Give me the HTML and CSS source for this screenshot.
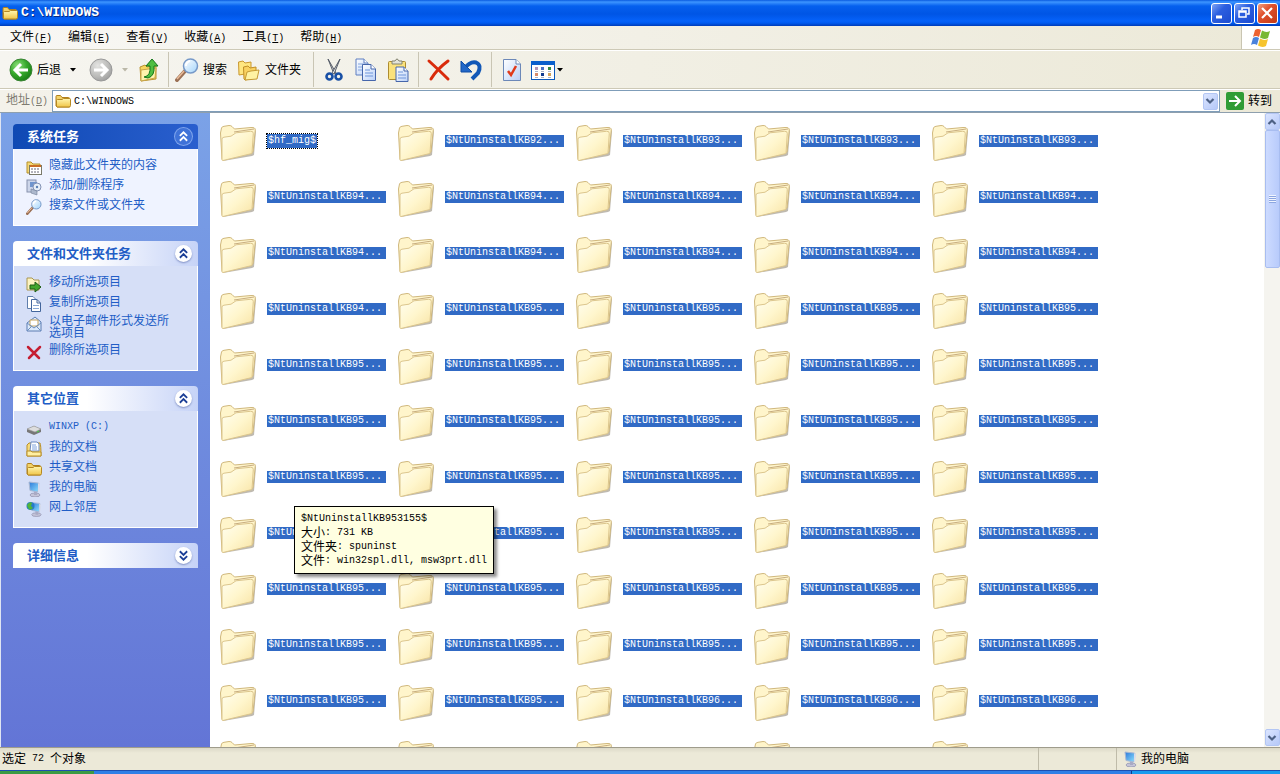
FILE: index.html
```html
<!DOCTYPE html>
<html lang="zh-CN">
<head>
<meta charset="utf-8">
<title>C:\WINDOWS</title>
<link rel="stylesheet" href="styles.css">
</head>
<body>
<svg class="defs" aria-hidden="true">
  <defs>
    <linearGradient id="gPaper" x1="0" y1="0" x2="1" y2="1"><stop offset="0" stop-color="#fffef0"/><stop offset=".5" stop-color="#fff6cd"/><stop offset="1" stop-color="#f8e3a4"/></linearGradient>
    <linearGradient id="gFolder" x1="0" y1="0" x2="0" y2="1"><stop offset="0" stop-color="#fff6b0"/><stop offset="1" stop-color="#f0c548"/></linearGradient>
    <radialGradient id="gGreen" cx=".35" cy=".3" r=".8"><stop offset="0" stop-color="#8ee07c"/><stop offset=".5" stop-color="#37a92c"/><stop offset="1" stop-color="#137712"/></radialGradient>
    <radialGradient id="gGray" cx=".35" cy=".3" r=".8"><stop offset="0" stop-color="#e4e4e2"/><stop offset=".6" stop-color="#bcbcba"/><stop offset="1" stop-color="#999"/></radialGradient>
    <linearGradient id="gLens" x1="0" y1="0" x2="1" y2="1"><stop offset="0" stop-color="#fff"/><stop offset="1" stop-color="#a4d5fb"/></linearGradient>
    <linearGradient id="gDoc" x1="0" y1="0" x2="1" y2="1"><stop offset="0" stop-color="#fff"/><stop offset="1" stop-color="#b9d0f8"/></linearGradient>
    <linearGradient id="gScreen" x1="0" y1="0" x2="1" y2="1"><stop offset="0" stop-color="#2c78d8"/><stop offset="1" stop-color="#8fe2ff"/></linearGradient>
  </defs>
  <symbol id="bigfolder" viewBox="0 0 38 38">
    <path d="M4 37L4 33L33 29L36 6L37 7L35 31L33 32Z" fill="#8b8270" opacity=".55"/>
    <path d="M1.500 9L2.500 4Q3 2.500 5 2.300L10 1.500Q12 1.400 13 2.500L15.500 5L32 3.500Q36.500 3.200 36.300 6L34 28L3 35.500Z" fill="#fff5cb" stroke="#d0b87d"/>
    <path d="M15 8L35 5" stroke="#c8ad80" fill="none"/>
    <path d="M3 15Q3 13.500 5 13.200L12 12.200L17 8.800L31.500 7.300Q34.500 7 34.300 9.500L33 29.500L4 36.500Q3 36.600 3 35.500Z" fill="url(#gPaper)" stroke="#dcc68d"/>
  </symbol>
  <symbol id="folder" viewBox="0 0 16 16">
    <path d="M1 13V3.500Q1 2.500 2 2.500H5.500L7 4.500H13.500Q14.500 4.500 14.500 5.500V14H2Z" fill="#f3d36a" stroke="#b07f1c"/>
    <path d="M1.500 13.500V7.500Q1.500 6.500 2.500 6.500H7L8.500 5.500H14.500Q15.500 5.500 15.500 6.500V12.500Q15.500 14 14 14H2Z" fill="url(#gFolder)" stroke="#b58822"/>
  </symbol>
  <symbol id="lens" viewBox="0 0 24 24">
    <path d="M2 22L10 13" stroke="#9b7055" stroke-width="4" stroke-linecap="round"/><path d="M2 21L9 13" stroke="#eabb98" stroke-width="1.500"/>
    <circle cx="15.500" cy="8" r="7" fill="url(#gLens)" stroke="#7799c8" stroke-width="1.500"/><path d="M11 8Q11 4 15 3" stroke="#fff" stroke-width="2" fill="none"/>
  </symbol>
  <symbol id="docs" viewBox="0 0 22 24">
    <path d="M1 1H9L13 5V17H1Z" fill="url(#gDoc)" stroke="#5f7fc0"/><path d="M9 1V5H13" fill="#fff" stroke="#5f7fc0"/><path d="M3 6H9M3 9H10M3 12H7" stroke="#83a5df"/>
    <path d="M7.500 6.500H16L20.500 11V22.500H7.500Z" fill="url(#gDoc)" stroke="#4666ab"/><path d="M16 6.500V11H20.500" fill="#fff" stroke="#4666ab"/><path d="M10 12H15M10 15H18M10 18H18" stroke="#6f96db"/>
  </symbol>
  <symbol id="computer" viewBox="0 0 16 16">
    <ellipse cx="9" cy="14" rx="5" ry="2" fill="#c4c4d8" stroke="#8486a4" stroke-width=".6"/><path d="M8 10L11 9V14H8Z" fill="#aaaac4"/>
    <path d="M3 1L12 2Q13 2 13 3L12 11L4 9.500Z" fill="url(#gScreen)" stroke="#a9b8d4"/><path d="M12 2L14 3.500L13 11L12 11Z" fill="#d8dcec"/>
  </symbol>
  <symbol id="up" viewBox="0 0 14 14"><path d="M4 6.500L7 3.500L10 6.500M4 10.500L7 7.500L10 10.500" fill="none" stroke="currentColor" stroke-width="1.500"/></symbol>
  <symbol id="chev" viewBox="0 0 10 8"><path d="M1.500 2L5 5.500L8.500 2" fill="none" stroke="#4d6185" stroke-width="2.200"/></symbol>
</svg>

<div class="window">
  <header class="title">
    <svg class="i16"><use href="#folder"/></svg>
    <h1>C:\WINDOWS</h1>
    <button class="cap" aria-label="最小化"><svg viewBox="0 0 18 18"><path d="M4 13H10" stroke="#fff" stroke-width="3"/></svg></button>
    <button class="cap" aria-label="还原"><svg viewBox="0 0 18 18"><path d="M7 6V4H14V10H12" fill="none" stroke="#fff" stroke-width="1.500"/><path d="M4 7H11V13H4ZM4 8H11" fill="none" stroke="#fff" stroke-width="1.500"/></svg></button>
    <button class="cap close" aria-label="关闭"><svg viewBox="0 0 18 18"><path d="M4 4L14 14M14 4L4 14" stroke="#fff" stroke-width="2.200"/></svg></button>
  </header>

  <nav class="menu">
    <button>文件<span class="lat">(<u>F</u>)</span></button>
    <button>编辑<span class="lat">(<u>E</u>)</span></button>
    <button>查看<span class="lat">(<u>V</u>)</span></button>
    <button>收藏<span class="lat">(<u>A</u>)</span></button>
    <button>工具<span class="lat">(<u>T</u>)</span></button>
    <button>帮助<span class="lat">(<u>H</u>)</span></button>
    <div class="flag"><svg viewBox="0 0 22 20">
      <path d="M5 2Q8 0 11 2L9 9Q6 7 3 9Z" fill="#ed6231"/><path d="M12 2.500Q16 5 20 3L18 10Q14 12 10 9.500Z" fill="#79b833"/>
      <path d="M3 10Q6 8 9 10L7 17Q4 15 1 17Z" fill="#4a82dc"/><path d="M10 10.500Q14 13 18 11L16 18Q12 20 8 17.500Z" fill="#f6c42d"/></svg></div>
  </nav>

  <div class="toolbar">
    <button class="back"><svg class="i24" viewBox="0 0 24 24"><circle cx="12" cy="12" r="11" fill="url(#gGreen)" stroke="#3a8434"/><path d="M19 12H7M12 6L6 12L12 18" fill="none" stroke="#fff" stroke-width="3"/></svg>后退</button>
    <button class="drop" aria-label="后退列表"><svg viewBox="0 0 6 4"><path d="M0 0H6L3 3.500Z" fill="#000"/></svg></button>
    <button class="fwd" aria-label="前进"><svg class="i24" viewBox="0 0 24 24"><circle cx="12" cy="12" r="11" fill="url(#gGray)" stroke="#999"/><path d="M5 12H17M12 6L18 12L12 18" fill="none" stroke="#fff" stroke-width="3"/></svg></button>
    <button class="drop" aria-label="前进列表"><svg viewBox="0 0 6 4"><path d="M0 0H6L3 3.500Z" fill="#bbb8a8"/></svg></button>
    <button class="upbtn" aria-label="向上"><svg class="i24" viewBox="0 0 24 24"><path d="M3 9L8 7L10 9L19 7V21L4 23Z" fill="#f8d75f" stroke="#b99230"/><path d="M4 12L19 10L18 20L4 23Z" fill="#fff3ad" stroke="#c9a548"/><path d="M7 19Q14 18 13 8H9L15 1L21 8H17Q18 18 11 20Z" fill="#4fbe42" stroke="#15761a"/></svg></button>
    <i class="sep first"></i>
    <button class="search"><svg class="i24"><use href="#lens"/></svg>搜索</button>
    <button class="folders"><svg class="i24" viewBox="0 0 24 24"><path d="M2 17L1.500 4L6 3L8 5L14 4V15Z" fill="#ffe680" stroke="#c99830"/><path d="M7 21L6.500 9L11 8L13 10L19 9V20L8 22Z" fill="#f9d160" stroke="#c08e26"/><path d="M8 22L10 14L14 13L22 12L20 21Z" fill="#fff2a3" stroke="#c59a34"/></svg>文件夹</button>
    <i class="sep"></i>
    <button class="tool" aria-label="剪切"><svg class="i24" viewBox="0 0 24 24"><path d="M6 1L14 15L12 16Z" fill="#ddd" stroke="#555c68"/><path d="M18 1L10 15L12 16Z" fill="#eee" stroke="#555c68"/><circle cx="7.500" cy="18.500" r="3" fill="none" stroke="#1950a5" stroke-width="2.600"/><circle cx="16.500" cy="18.500" r="3" fill="none" stroke="#1950a5" stroke-width="2.600"/></svg></button>
    <button class="tool" aria-label="复制"><svg class="i24"><use href="#docs"/></svg></button>
    <button class="tool" aria-label="粘贴"><svg class="i24" viewBox="0 0 24 24"><rect x="2.500" y="3.500" width="17" height="18" rx="1" fill="#fbe27c" stroke="#ad8c30"/><path d="M6 6V3H9Q11 -1 13 3H16V6Z" fill="#e4e4da" stroke="#82826e"/><path d="M10 9H18L22 13V23.500H10Z" fill="url(#gDoc)" stroke="#4666ab"/><path d="M18 9V13H22" fill="#fff" stroke="#4666ab"/><path d="M12 14H17M12 17H20M12 20H20" stroke="#6f96db"/></svg></button>
    <i class="sep"></i>
    <button class="tool" aria-label="删除"><svg class="i24" viewBox="0 0 24 24"><path d="M2 3Q12 12 21 21M21 3Q10 11 4 21" fill="none" stroke="#d92b0b" stroke-width="3" stroke-linecap="round"/></svg></button>
    <button class="tool" aria-label="撤消"><svg class="i24" viewBox="0 0 24 24"><path d="M5 11Q11 3 17 4.500Q23 7 19 15L13 21" fill="none" stroke="#1258b7" stroke-width="4"/><path d="M2 3V14H13Z" fill="#2268c8" stroke="#0e4da5"/></svg></button>
    <i class="sep"></i>
    <button class="tool" aria-label="属性"><svg class="i24" viewBox="0 0 24 24"><path d="M3.500 1.500H16L20.500 6V22.500H3.500Z" fill="url(#gDoc)" stroke="#6c88b8"/><path d="M16 1.500V6H20.500" fill="#fff" stroke="#6c88b8"/><path d="M8 13L11 17L16 8" fill="none" stroke="#e03a1b" stroke-width="2.500"/></svg></button>
    <button class="tool views" aria-label="查看方式"><svg class="i24" viewBox="0 0 24 24"><rect x=".5" y="3.500" width="23" height="18" fill="#fff" stroke="#0b59bd"/><path d="M0 3H24V7H0Z" fill="#0b60cc"/><path d="M4 9H7V12H4Z" fill="#b196b8"/><path d="M10 9H13V12H10Z" fill="#4772c4"/><path d="M17 9H20V12H17Z" fill="#338a41"/><path d="M4 15H7V18H4Z" fill="#d58a69"/><path d="M10 15H13V18H10Z" fill="#103c90"/><path d="M17 15H20V18H17Z" fill="#d1a25c"/><path d="M4 13.500H7M10 13.500H13M17 13.500H20M4 19.500H7M10 19.500H13M17 19.500H20" stroke="#a9b4c8"/></svg><svg class="arrow" viewBox="0 0 6 4"><path d="M0 0H6L3 3.500Z"/></svg></button>
  </div>

  <form class="address">
    <label for="addr">地址<span class="lat">(<u>D</u>)</span></label>
    <div class="combo">
      <svg class="i16"><use href="#folder"/></svg>
      <input id="addr" type="text" value="C:\WINDOWS">
      <button type="button" class="sbtn" aria-label="展开"><svg viewBox="0 0 10 8"><use href="#chev"/></svg></button>
    </div>
    <button type="button" class="go"><svg viewBox="0 0 18 18"><rect width="18" height="18" rx="2" fill="#2f9c35"/><path d="M3 9H14M9 4L14 9L9 14" fill="none" stroke="#fff" stroke-width="2"/></svg>转到</button>
  </form>

  <div class="content">
    <aside class="side">
      <section class="panel primary">
        <h2>系统任务<button aria-label="折叠"><svg><use href="#up"/></svg></button></h2>
        <ul>
          <li><svg class="i16" viewBox="0 0 16 16"><path d="M1 14V3H5L7 5H14V14Z" fill="#f5d874" stroke="#b5902c"/><rect x="3.500" y="6.500" width="12" height="9" fill="#fff" stroke="#7a7a6a"/><path d="M4 7H15" stroke="#c96d26" stroke-width="2"/><path d="M6 9V15M9 9V15M12 9V15" stroke="#667" stroke-dasharray="2 1"/></svg><a href="#">隐藏此文件夹的内容</a></li>
          <li><svg class="i16" viewBox="0 0 16 16"><rect x="1" y="1" width="9" height="12" fill="#cdd6ea" stroke="#8792ad"/><path d="M4 3H11V8H4Z" fill="#6f95cd"/><circle cx="11" cy="8" r="4" fill="#e6eff8" stroke="#8392b4"/><circle cx="11" cy="8" r="1.200" fill="#5c80b4"/><path d="M5 10L11 12V16L5 14Z" fill="#acb8cd" stroke="#737f99" stroke-width=".6"/></svg><a href="#">添加/删除程序</a></li>
          <li><svg class="i16"><use href="#lens"/></svg><a href="#">搜索文件或文件夹</a></li>
        </ul>
      </section>
      <section class="panel">
        <h2>文件和文件夹任务<button aria-label="折叠"><svg><use href="#up"/></svg></button></h2>
        <ul>
          <li><svg class="i16" viewBox="0 0 16 16"><path d="M1 14V2H6L8 4H13V14Z" fill="#fdf3c0" stroke="#aa9650"/><path d="M4 13V9H9V6L15 11L9 16V13Z" fill="#42a52d" stroke="#1f5c14"/></svg><a href="#">移动所选项目</a></li>
          <li><svg class="i16" viewBox="0 0 16 16"><path d="M1.500 .5H7L10.500 4V12.500H1.500Z" fill="#fff" stroke="#5f7eac"/><path d="M5.500 3.500H11L14.500 7V15.500H5.500Z" fill="#fff" stroke="#44669c"/><path d="M11 3.500V7H14.500" fill="none" stroke="#44669c"/><path d="M7 9.500H13M7 12.500H13" stroke="#8aa8d4"/></svg><a href="#">复制所选项目</a></li>
          <li class="two"><svg class="i16" viewBox="0 0 16 16"><path d="M1 7L9 1L15 6V15H1Z" fill="#dbe9fc" stroke="#5c7db1"/><path d="M4 4H12V10H4Z" fill="#fff" stroke="#c6a35d"/><path d="M1 7L8 12L15 7M1 15L6 10M15 15L10 10" fill="none" stroke="#6c8fc1"/></svg><a href="#">以电子邮件形式发送所选项目</a></li>
          <li><svg class="i16" viewBox="0 0 16 16"><path d="M2 3L13 14M14 3L3 14" stroke="#c51e32" stroke-width="2.500" stroke-linecap="round"/></svg><a href="#">删除所选项目</a></li>
        </ul>
      </section>
      <section class="panel">
        <h2>其它位置<button aria-label="折叠"><svg><use href="#up"/></svg></button></h2>
        <ul>
          <li><svg class="i16" viewBox="0 0 16 16"><path d="M1 8L8 5L15 8V11L8 14L1 11Z" fill="#777"/><path d="M1 8L8 5L15 8L9 11Z" fill="#ddd" stroke="#999" stroke-width=".6"/><path d="M11 11L13 10" stroke="#4d4"/></svg><a href="#" class="lat">WINXP (C:)</a></li>
          <li><svg class="i16" viewBox="0 0 16 16"><path d="M1 15V4L3 2H14Q15 4 15 15Z" fill="#f7da78" stroke="#b98f2b"/><path d="M5 1H11L13 3V10H4Z" fill="#fff" stroke="#6a88c0"/><path d="M6 4H10M6 6H11M6 8H11" stroke="#7ea2dd"/><path d="M1 10H5L6 11H15V15H1Z" fill="#ffefa2" stroke="#b98f2b"/></svg><a href="#">我的文档</a></li>
          <li><svg class="i16"><use href="#folder"/></svg><a href="#">共享文档</a></li>
          <li><svg class="i16"><use href="#computer"/></svg><a href="#">我的电脑</a></li>
          <li><svg class="i16" viewBox="0 0 16 16"><g transform="translate(2)"><use href="#computer" width="15" height="16"/></g><circle cx="4.500" cy="5" r="4" fill="#277bc8"/><path d="M1 4Q4 0 6 2L5 5L7 7L4 9L2 7Z" fill="#4fb53a"/></svg><a href="#">网上邻居</a></li>
        </ul>
      </section>
      <section class="panel closed">
        <h2>详细信息<button aria-label="展开"><svg class="flip"><use href="#up"/></svg></button></h2>
      </section>
    </aside>
    <main class="files" id="files"></main>
    <div class="scroll" aria-hidden="true">
      <span class="sbtn"><svg class="flip" viewBox="0 0 10 8"><use href="#chev"/></svg></span>
      <div class="track"><div class="thumb"><i></i></div></div>
      <span class="sbtn"><svg viewBox="0 0 10 8"><use href="#chev"/></svg></span>
    </div>
    <div class="tip" role="tooltip">
      <div><span class="lat">$NtUninstallKB953155$</span></div>
      <div>大小<span class="lat">: 731 KB</span></div>
      <div>文件夹<span class="lat">: spuninst</span></div>
      <div>文件<span class="lat">: win32spl.dll, msw3prt.dll</span></div>
    </div>
  </div>

  <footer class="status">
    <div class="count">选定<span class="lat"> 72 </span>个对象</div>
    <div class="blank"></div>
    <div class="zone"><svg class="i16"><use href="#computer"/></svg>我的电脑</div>
  </footer>
  <div class="taskbar"><i class="start"></i><i class="tasks"></i><i class="tray"></i></div>
</div>
<script src="app.js"></script>
</body>
</html>
```
FILE: styles.css
```css
* { box-sizing: border-box; }
body {
  margin: 0;
  font: 12px/14px "Liberation Sans", "Noto Sans CJK SC", sans-serif;
  color: #000;
}
button { border: 0; padding: 0; margin: 0; background: none; font: inherit; color: inherit; }
svg { display: block; flex: none; overflow: visible; }
a { color: #215dc6; text-decoration: none; }
.defs { position: absolute; width: 0; height: 0; }
.lat { font-family: "Liberation Mono", monospace; font-size: 10px; white-space: pre; }
.i16 { width: 16px; height: 16px; }
.i24 { width: 24px; height: 24px; }
.flip { transform: rotate(180deg); }

.window { display: flex; flex-direction: column; height: 100vh; overflow: hidden; background: #ece9d8; }

.title {
  display: flex; align-items: center; gap: 2px; height: 26px; flex: none; padding: 0 2px;
  background: linear-gradient(#0a5be0 0, #3d95ff 2px, #0560ee 6px, #0055e5 14px, #0562fa 21px, #005bf0 23px, #003cb8 26px);
}
.title h1 {
  flex: 1; margin: 0 0 0 1px; color: #fff; text-shadow: 1px 1px #0a2a80;
  font: bold 13px/16px "Liberation Mono", monospace;
}
.cap { width: 21px; height: 21px; border: 1px solid #fff; border-radius: 3px; background: linear-gradient(135deg, #7fa4f5, #2c5fe0 40%, #1b4bd0); }
.cap svg { width: 18px; height: 18px; }
.close { background: linear-gradient(135deg, #f0a080, #e0502c 40%, #c23a16); }

.menu { display: flex; height: 24px; flex: none; padding-left: 2px; background: linear-gradient(90deg, #f8f7f4, #ece9d8); border-bottom: 1px solid #cdc9b6; }
.menu button { padding: 0 8px; }
.flag { display: flex; align-items: center; justify-content: center; width: 39px; margin-left: auto; background: #fff; border-left: 1px solid #c9c5b2; }
.flag svg { width: 22px; height: 20px; }

.toolbar {
  display: flex; align-items: center; height: 39px; flex: none; padding-left: 9px;
  background: linear-gradient(90deg, #f6f5f0, #ece9d8); border-top: 1px solid #fff; border-bottom: 1px solid #cdc9b6;
}
.toolbar button { display: flex; align-items: center; gap: 4px; }
.drop { width: 20px; justify-content: center; margin-left: 2px; }
.drop svg, .arrow { width: 6px; height: 4px; }
.fwd { margin-left: 6px; }
.upbtn { margin-left: 2px; }
.sep { width: 1px; height: 35px; margin: 0 4px; background: #c9c5b4; }
.first { margin: 0 6px 0 7px; }
.toolbar .folders { margin-left: 10px; }
.toolbar .folders + .sep { margin-left: 12px; }
.tool { padding: 0 4px; }
.toolbar .views { gap: 2px; padding-left: 3px; }

.address { display: flex; align-items: center; height: 23px; flex: none; padding: 0 8px 0 6px; background: linear-gradient(90deg, #f4f2ea, #ece9d8); border-top: 1px solid #fff; }
.address label { width: 46px; color: #7e7b70; }
.combo { display: flex; align-items: center; flex: 1; height: 22px; padding: 0 1px 0 2px; background: #fff; border: 1px solid #7f9db9; }
.combo input { flex: 1; min-width: 0; height: 18px; padding: 0; margin-left: 3px; border: 0; outline: 0; background: none; font: 10px/14px "Liberation Mono", monospace; color: #000; }
.sbtn { display: flex; align-items: center; justify-content: center; width: 15px; height: 17px; border: 1px solid #b3c6f4; border-radius: 2px; background: linear-gradient(135deg, #dbe5ff, #b5c8f8); }
.sbtn svg { width: 10px; height: 8px; }
.go { display: flex; align-items: center; gap: 4px; margin-left: 6px; }
.go svg { width: 18px; height: 18px; }

.content { position: relative; display: flex; flex: 1; min-height: 0; background: #fff; border-top: 1px solid #8e9fae; }
.side { width: 210px; flex: none; display: flex; flex-direction: column; gap: 15px; padding: 11px 12px 0 12px; border-left: 1px solid #dfe5f2; background: linear-gradient(#7ba2e7, #6375d6); overflow: hidden; }
.panel h2 {
  display: flex; align-items: center; justify-content: space-between; height: 25px; margin: 0; padding: 0 6px 0 14px;
  border-radius: 4px 4px 0 0; background: linear-gradient(90deg, #fff 40%, #c6d3f7); color: #215dc6; font-size: 13px; line-height: 16px;
}
.panel h2 button { width: 17px; height: 17px; border-radius: 50%; background: #fff; color: #1c3f96; box-shadow: 0 1px 2px #7f8fc4; }
.panel h2 svg { width: 17px; height: 17px; }
.panel ul { list-style: none; margin: 0; padding: 7px 20px 9px 12px; border: 1px solid #fff; border-top: 0; background: #d6dff7; }
.panel li { display: flex; gap: 7px; min-height: 20px; padding-top: 2px; line-height: 14px; }
.panel li svg { margin-top: 1px; }
.panel .two { line-height: 12px; min-height: 28px; }
.primary h2 { background: linear-gradient(90deg, #0f49b4, #2a5fce); color: #fff; }
.primary h2 button { background: #3f72d8; color: #fff; box-shadow: 0 0 0 1px #7fa4ec; }
.primary ul { background: #eff3ff; }

.files { flex: 1; min-width: 0; overflow: hidden; display: grid; grid-template-columns: repeat(auto-fill, 178px); grid-auto-rows: 56px; align-content: start; padding-right: 150px; }
.file { display: flex; align-items: center; gap: 10px; padding-left: 9px; }
.file svg { width: 38px; height: 38px; margin-top: 4px; }
.file .name { width: 119px; padding: 0 1px; background: #316ac5; color: #fff; font: 10px/12px "Liberation Mono", monospace; }
.file .focus { width: auto; padding: 1px; outline: 1px dotted #000; }

.scroll { display: flex; flex-direction: column; align-items: center; width: 16px; flex: none; padding-bottom: 1px; background: #f5f4ef; }
.track { flex: 1; width: 15px; }
.thumb { display: flex; align-items: center; justify-content: center; width: 15px; height: 23%; border: 1px solid #a8bdf0; border-radius: 2px; background: linear-gradient(90deg, #cddbff, #b8cbfb); }
.thumb i { width: 7px; height: 8px; background: repeating-linear-gradient(#f0f5ff 0 1px, #8ca6e0 1px 2px); }

.tip { position: absolute; left: 294px; top: 393px; min-width: 200px; padding: 5px 6px; border: 1px solid #000; background: #ffffe1; box-shadow: 3px 3px 3px rgba(0, 0, 0, .45); }
.tip div { display: flex; align-items: center; height: 14px; }

.status { display: flex; height: 23px; flex: none; border-top: 1px solid #9f9c8c; background: linear-gradient(#dcd9c8, #ece9d8 5px); }
.status div { display: flex; align-items: center; white-space: pre; }
.count { flex: 1; padding-left: 2px; }
.status .blank { width: 78px; border-left: 1px solid #bfbba9; }
.status .zone { gap: 3px; width: 164px; padding-left: 5px; border-left: 1px solid #bfbba9; }
.taskbar { display: flex; height: 4px; flex: none; border-top: 1px solid #1c4fb0; }
.start { width: 94px; background: #3c9a44; }
.tasks { flex: 1; background: #2f7fe6; }
.tray { width: 149px; border-left: 1px solid #0b3b8c; background: #189bee; }
```
FILE: app.js
```js
const rows = [
  ["", 92, 93, 93, 93],
  [94, 94, 94, 94, 94],
  [94, 94, 94, 94, 94],
  [94, 95, 95, 95, 95],
  [95, 95, 95, 95, 95],
  [95, 95, 95, 95, 95],
  [95, 95, 95, 95, 95],
  [95, 95, 95, 95, 95],
  [95, 95, 95, 95, 95],
  [95, 95, 95, 95, 95],
  [95, 95, 96, 96, 96],
  [null, null, null, null, null]
];
const icon = '<svg><use href="#bigfolder"/></svg>';
document.getElementById("files").innerHTML = rows.flat().map(n => {
  if (n === null) return `<div class="file">${icon}</div>`;
  const label = n === "" ? "$hf_mig$" : `$NtUninstallKB${n}...`;
  return `<div class="file">${icon}<span class="name${n === "" ? " focus" : ""}">${label}</span></div>`;
}).join("");
```
